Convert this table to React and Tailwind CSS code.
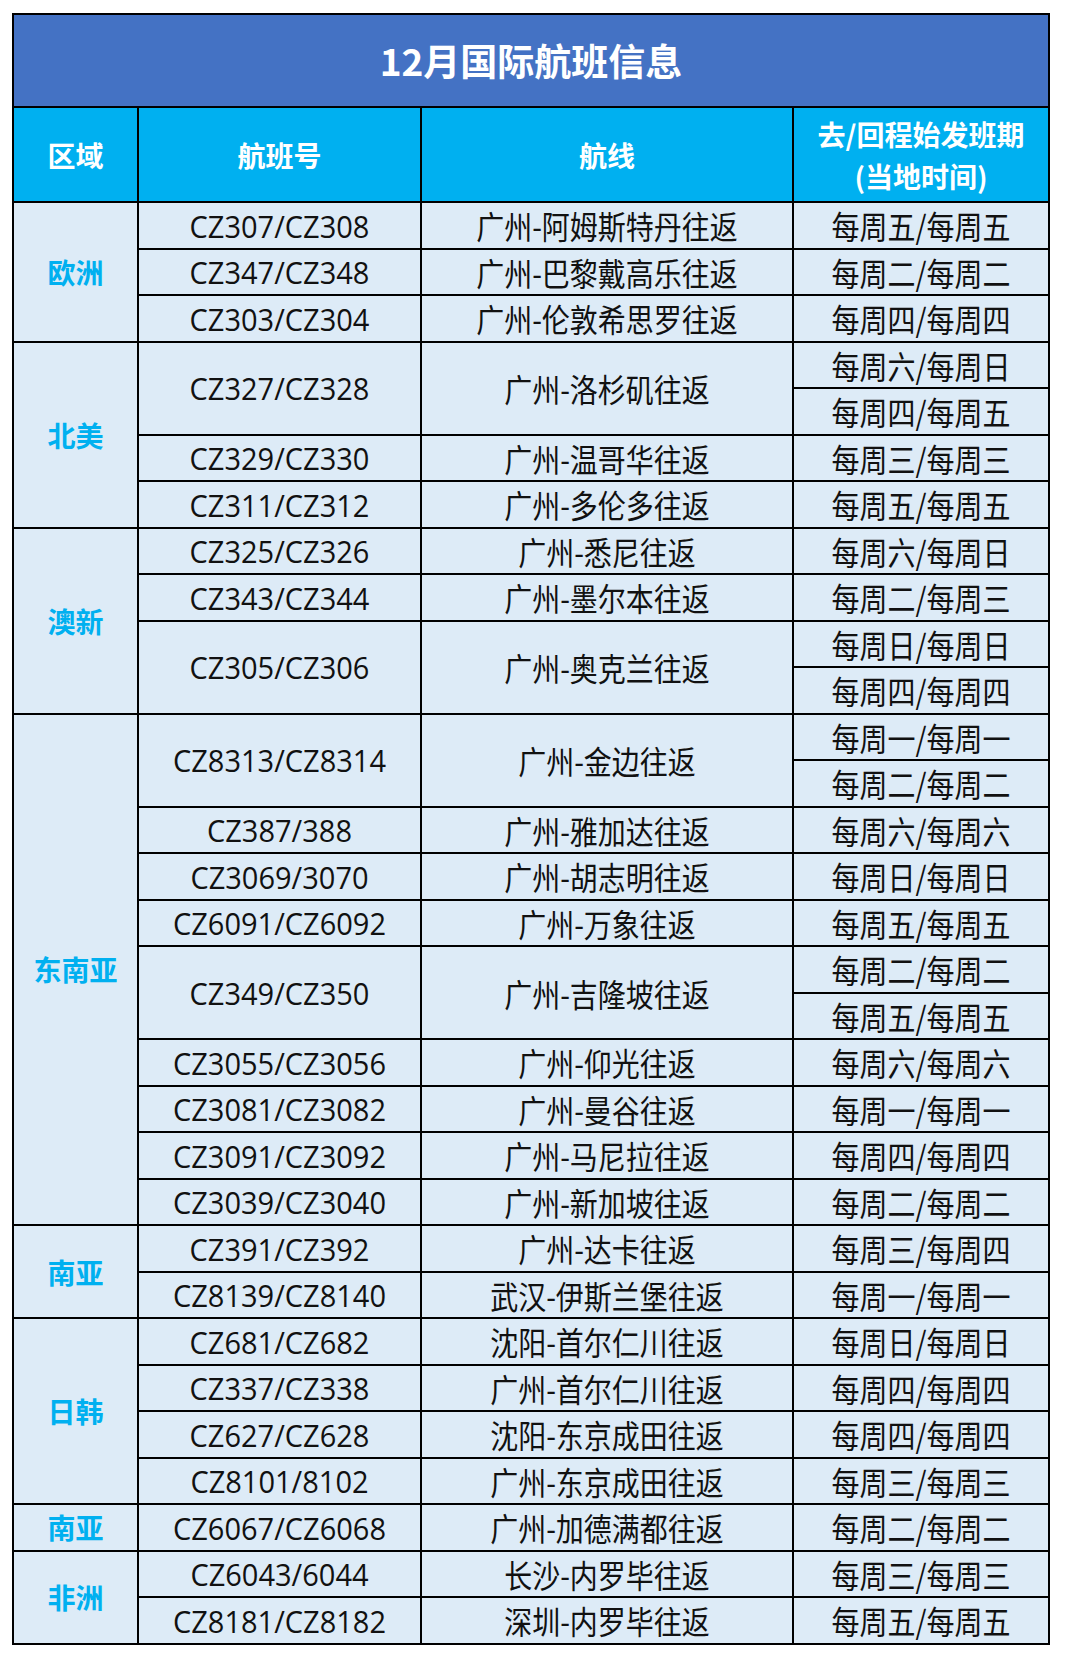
// 12月国际航班信息表
// 区域 / 航班号 / 航线 / 班期，区域和航班号用 rowSpan 合并

const regions = [
  {
    name: '欧洲',
    flights: [
      { no: 'CZ307/CZ308', route: '广州-阿姆斯特丹往返', days: ['每周五/每周五'] },
      { no: 'CZ347/CZ348', route: '广州-巴黎戴高乐往返', days: ['每周二/每周二'] },
      { no: 'CZ303/CZ304', route: '广州-伦敦希思罗往返', days: ['每周四/每周四'] },
    ],
  },
  {
    name: '北美',
    flights: [
      { no: 'CZ327/CZ328', route: '广州-洛杉矶往返', days: ['每周六/每周日', '每周四/每周五'] },
      { no: 'CZ329/CZ330', route: '广州-温哥华往返', days: ['每周三/每周三'] },
      { no: 'CZ311/CZ312', route: '广州-多伦多往返', days: ['每周五/每周五'] },
    ],
  },
  {
    name: '澳新',
    flights: [
      { no: 'CZ325/CZ326', route: '广州-悉尼往返', days: ['每周六/每周日'] },
      { no: 'CZ343/CZ344', route: '广州-墨尔本往返', days: ['每周二/每周三'] },
      { no: 'CZ305/CZ306', route: '广州-奥克兰往返', days: ['每周日/每周日', '每周四/每周四'] },
    ],
  },
  {
    name: '东南亚',
    flights: [
      { no: 'CZ8313/CZ8314', route: '广州-金边往返', days: ['每周一/每周一', '每周二/每周二'] },
      { no: 'CZ387/388', route: '广州-雅加达往返', days: ['每周六/每周六'] },
      { no: 'CZ3069/3070', route: '广州-胡志明往返', days: ['每周日/每周日'] },
      { no: 'CZ6091/CZ6092', route: '广州-万象往返', days: ['每周五/每周五'] },
      { no: 'CZ349/CZ350', route: '广州-吉隆坡往返', days: ['每周二/每周二', '每周五/每周五'] },
      { no: 'CZ3055/CZ3056', route: '广州-仰光往返', days: ['每周六/每周六'] },
      { no: 'CZ3081/CZ3082', route: '广州-曼谷往返', days: ['每周一/每周一'] },
      { no: 'CZ3091/CZ3092', route: '广州-马尼拉往返', days: ['每周四/每周四'] },
      { no: 'CZ3039/CZ3040', route: '广州-新加坡往返', days: ['每周二/每周二'] },
    ],
  },
  {
    name: '南亚',
    flights: [
      { no: 'CZ391/CZ392', route: '广州-达卡往返', days: ['每周三/每周四'] },
      { no: 'CZ8139/CZ8140', route: '武汉-伊斯兰堡往返', days: ['每周一/每周一'] },
    ],
  },
  {
    name: '日韩',
    flights: [
      { no: 'CZ681/CZ682', route: '沈阳-首尔仁川往返', days: ['每周日/每周日'] },
      { no: 'CZ337/CZ338', route: '广州-首尔仁川往返', days: ['每周四/每周四'] },
      { no: 'CZ627/CZ628', route: '沈阳-东京成田往返', days: ['每周四/每周四'] },
      { no: 'CZ8101/8102', route: '广州-东京成田往返', days: ['每周三/每周三'] },
    ],
  },
  {
    name: '南亚',
    flights: [
      { no: 'CZ6067/CZ6068', route: '广州-加德满都往返', days: ['每周二/每周二'] },
    ],
  },
  {
    name: '非洲',
    flights: [
      { no: 'CZ6043/6044', route: '长沙-内罗毕往返', days: ['每周三/每周三'] },
      { no: 'CZ8181/CZ8182', route: '深圳-内罗毕往返', days: ['每周五/每周五'] },
    ],
  },
]

const cell = 'border-2 border-black p-0 text-center align-middle'
const cjk = "font-['Noto_Sans_CJK_SC',sans-serif]"
const cjkData = "font-['Noto_Sans_CJK_SC',sans-serif] text-[28px] text-[#111]"
const latin = "font-['Open_Sans','Noto_Sans_CJK_SC',sans-serif] text-[29px] text-[#111]"

// 原图文字略微竖向拉长，这里用 scale-y 还原
function Txt({ children, tall }) {
  return (
    <span className={`inline-block leading-none ${tall ? 'scale-y-[1.15]' : 'scale-y-[1.06]'}`}>
      {children}
    </span>
  )
}

function RegionRows({ region }) {
  const total = region.flights.reduce((n, f) => n + f.days.length, 0)
  const rows = []
  region.flights.forEach((f, i) => {
    f.days.forEach((d, j) => {
      rows.push(
        <tr key={`${f.no}-${j}`} className="h-[46.5px]">
          {i === 0 && j === 0 && (
            <td rowSpan={total} className={`${cell} ${cjk} text-[28px] font-bold text-[#00B0F0]`}>
              {region.name}
            </td>
          )}
          {j === 0 && (
            <td rowSpan={f.days.length} className={`${cell} ${latin}`}>
              <Txt>{f.no}</Txt>
            </td>
          )}
          {j === 0 && (
            <td rowSpan={f.days.length} className={`${cell} ${cjkData}`}>
              <Txt tall>{f.route}</Txt>
            </td>
          )}
          <td className={`${cell} ${cjkData}`}>
            <Txt tall>{d}</Txt>
          </td>
        </tr>
      )
    })
  })
  return rows
}

export default function App() {
  return (
    <div className="bg-white w-[1080px] h-[1658px] pt-[13px] pl-[12px]">
      <table className="w-[1038px] table-fixed border-collapse bg-[#DDEBF7]">
        <colgroup>
          <col className="w-[125px]" />
          <col className="w-[283px]" />
          <col className="w-[372px]" />
          <col className="w-[256px]" />
        </colgroup>
        <thead>
          {/* 标题栏 */}
          <tr className="h-[93px]">
            <th colSpan={4} className={`${cell} ${cjk} bg-[#4472C4] text-white text-[37px] font-bold`}>
              12月国际航班信息
            </th>
          </tr>
          {/* 表头 */}
          <tr className="h-[95px]">
            <th className={`${cell} ${cjk} bg-[#00B0F0] text-white text-[28px] font-bold`}>区域</th>
            <th className={`${cell} ${cjk} bg-[#00B0F0] text-white text-[28px] font-bold`}>航班号</th>
            <th className={`${cell} ${cjk} bg-[#00B0F0] text-white text-[28px] font-bold`}>航线</th>
            <th className={`${cell} ${cjk} bg-[#00B0F0] text-white text-[28px] font-bold leading-[42px]`}>
              去/回程始发班期
              <br />
              (当地时间)
            </th>
          </tr>
        </thead>
        <tbody>
          {regions.map((r, i) => (
            <RegionRows key={i} region={r} />
          ))}
        </tbody>
      </table>
    </div>
  )
}
